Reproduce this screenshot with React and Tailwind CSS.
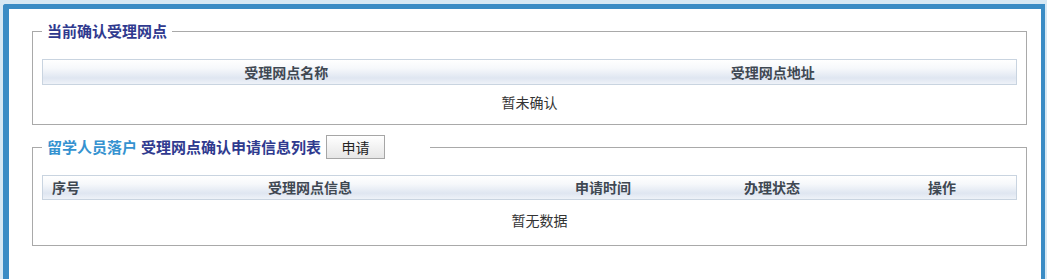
export default function App() {
  const font = { fontFamily: '"Noto Sans CJK SC", "Liberation Sans", sans-serif' }
  const headBg = "bg-[linear-gradient(to_bottom,#ffffff_0%,#f6f8fb_35%,#dfe6f1_75%,#eef2f8_100%)]"

  return (
    <div className="h-[279px] w-[1047px] overflow-hidden bg-[#d6e8f4] pl-[3px] pr-[2px] pt-[4px]" style={font}>
      <div className="h-[300px] rounded-tl-[3px] border-l-[6px] border-r-[4px] border-t-[5px] border-[#3a8cc5] bg-white pt-[12px]">
        <fieldset className="ml-[23px] mr-[14px] border border-[#a9a9a9] px-[9px] pb-[4px]">
          <legend className="px-[5px] text-[15px] font-bold leading-[20px] text-[#2f3a8f]">
            当前确认受理网点
          </legend>
          <div className="mt-[18px]">
            <div className={`grid h-[26px] grid-cols-2 border border-[#c9d4e0] ${headBg} text-[14px] font-bold leading-[24px] text-[#3f4852]`}>
              <div className="text-center">受理网点名称</div>
              <div className="text-center">受理网点地址</div>
            </div>
            <div className="h-[35px] text-center text-[14px] leading-[34px] text-[#333]">暂未确认</div>
          </div>
        </fieldset>

        <fieldset className="ml-[23px] mr-[14px] mt-[10px] border border-[#a9a9a9] px-[9px] pb-[4px]">
          <legend className="flex items-center pl-[5px] pr-[45px] text-[15px] font-bold leading-[24px]">
            <span className="text-[#3592d0]">留学人员落户</span>
            <span className="ml-[4px] text-[#2f3a8f]">受理网点确认申请信息列表</span>
            <button className="ml-[5px] h-[24px] w-[59px] border border-[#a6a6a6] bg-[linear-gradient(to_bottom,#ffffff,#e6e6e6)] text-[14px] font-normal leading-[22px] text-[#222]">
              申请
            </button>
          </legend>
          <div className="mt-[16px]">
            <div className={`grid h-[25px] grid-cols-[47px_440px_146px_192px_1fr] border border-[#c9d4e0] ${headBg} text-[14px] font-bold leading-[23px] text-[#3f4852]`}>
              <div className="pl-[9px]">序号</div>
              <div className="text-center">受理网点信息</div>
              <div className="text-center">申请时间</div>
              <div className="text-center">办理状态</div>
              <div className="text-center">操作</div>
            </div>
            <div className="h-[41px] pl-[20px] text-center text-[14px] leading-[40px] text-[#333]">暂无数据</div>
          </div>
        </fieldset>
      </div>
    </div>
  )
}
